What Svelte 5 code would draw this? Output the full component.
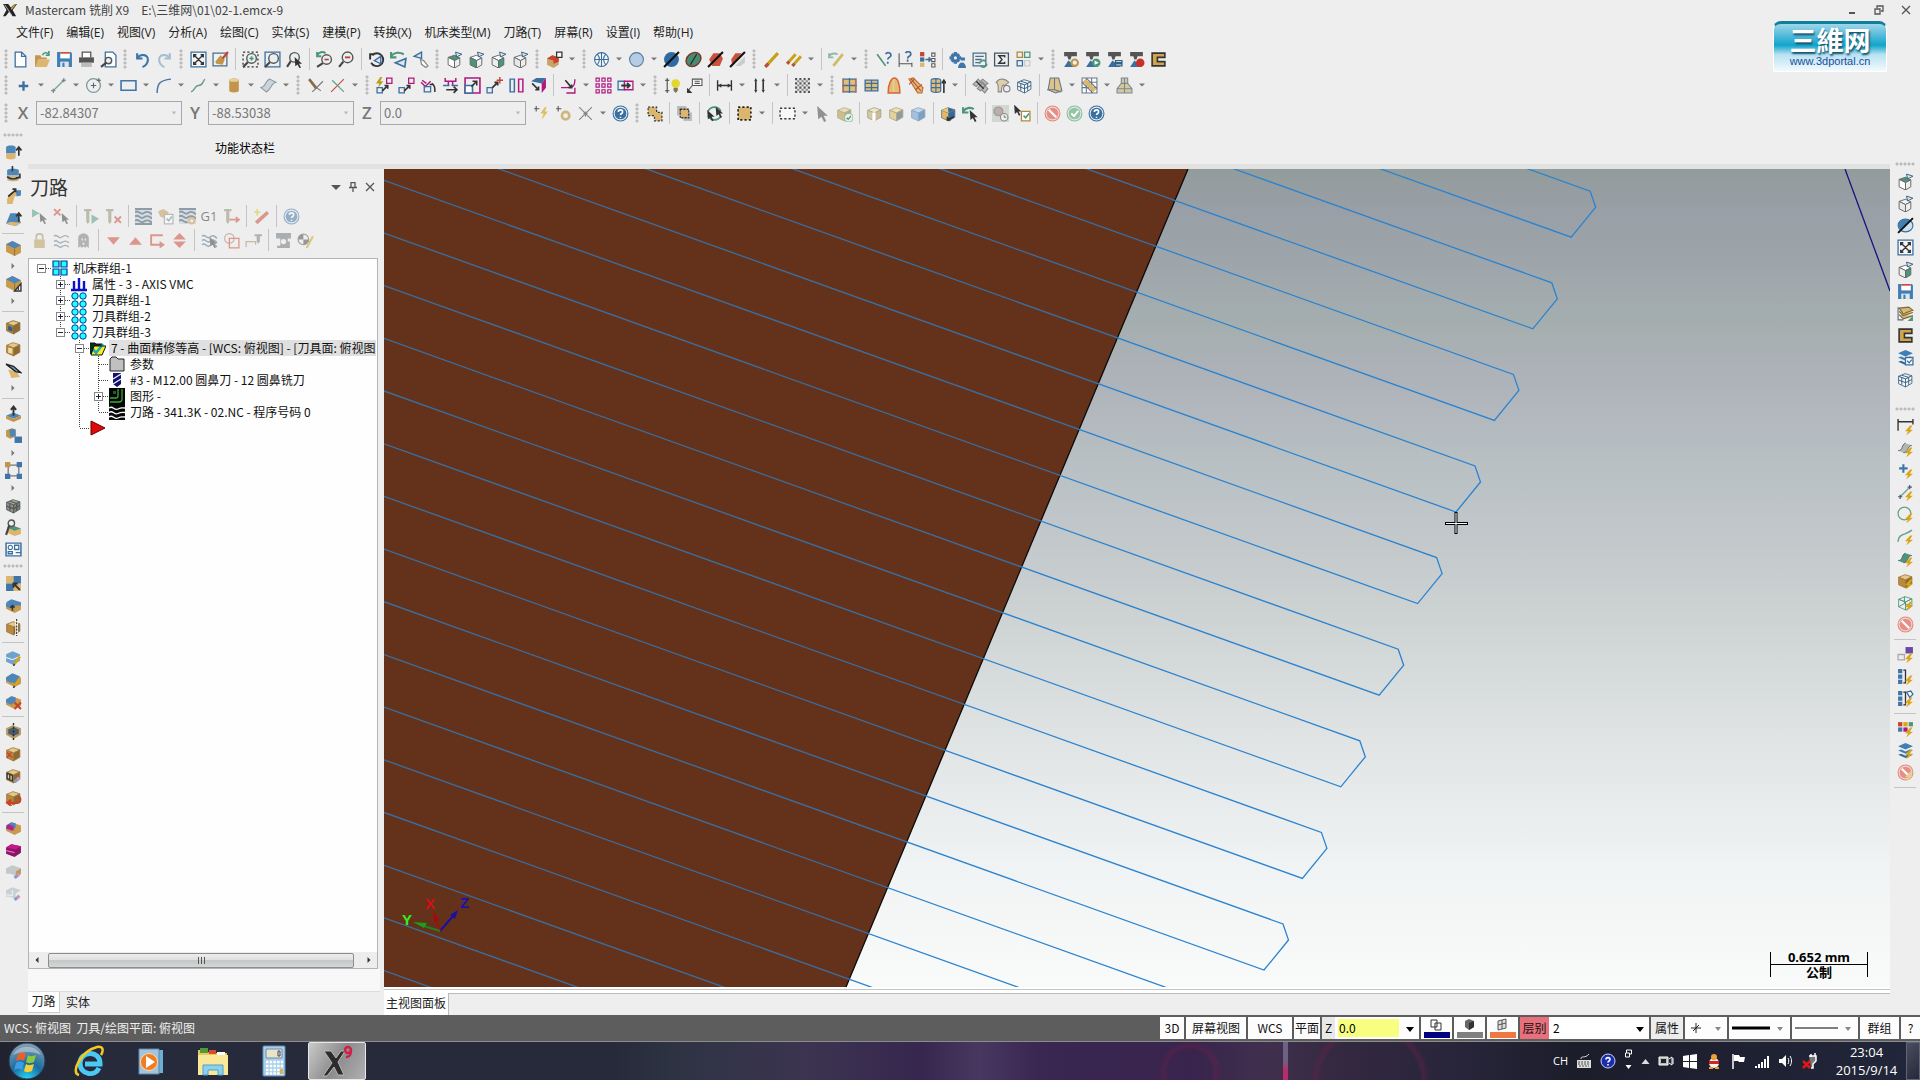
<script lang="ts">
	type Cell = string;

	const p = (d: string, stroke = '#4d4d4d', fill = 'none', w = 1.2) =>
		`<path d="${d}" stroke="${stroke}" fill="${fill}" stroke-width="${w}"/>`;
	const fill = (d: string, color: string) => `<path d="${d}" fill="${color}"/>`;
	const cube = (top: string, left: string, right: string, line = '#777') =>
		p('M1.500 5L7.500 2.500 14 4.500 8 7.500z', line, top, 0.8) +
		p('M1.500 5V12L8 15V7.500z', line, left, 0.8) +
		p('M14 4.500V11.500L8 15V7.500z', line, right, 0.8);
	const tanCube = cube('#e6c88c', '#b8893e', '#8c6a34', '#a07c3c');

	const blue = '#3a6f9f';
	const green = '#4a967a';
	const tan = '#dcb66f';
	const red = '#c9422c';
	const pink = '#b01880';
	const dark = '#333';
	const grey = '#888';

	const bolt = fill('M12.500 7L7.500 12.500h3L8.500 16.500 15 11h-3l2.500-4z', '#d9a514');
	const arrowUp = p('M13 11V3M10.500 6L13 3l2.500 3', dark, 'none', 1.6);
	const cursor = fill('M3 1L13 10H9L11.500 15 9.500 16 7 11 4 13.500z', dark);
	const viewCube = (t: string, l: string, r: string) =>
		p('M2 6L8 4l5 2.500-5 2.500z', '#666', t, 0.9) +
		p('M2 6v7l6 3V9z', '#666', l, 0.9) +
		p('M13 6.500v6.500l-5 3V9z', '#666', r, 0.9) +
		p('M9 1l6 2-5 2.500z', '#356080', '#dce6ec', 0.9);
	const lens = (x: number, y: number, r: number) =>
		`<circle cx="${x}" cy="${y}" r="${r}" fill="#e9f0f2" stroke="#555" stroke-width="1.300"/>` +
		p(`M${x - r + 1} ${y + r - 1}L1 15`, '#444', 'none', 2);
	const lathe = (extra: string) =>
		fill('M2 1h12v4H9l-1 3H6L5 5H2z', '#555') + fill('M2 15h11v-3l-4-1-3-2-2 3z', blue) + extra;
	const help = (c = blue) =>
		`<circle cx="8" cy="8" r="7" fill="#e4edf4" stroke="${c}"/><circle cx="8" cy="8" r="5.500" fill="${c}"/>` +
		p('M6 6.500C6 4 10 4 10 6.500 10 8 8 8 8 9.500M8 11v1.300', '#fff', 'none', 1.5);
	const forbid =
		'<circle cx="8" cy="8" r="7" fill="#f5d5d0" stroke="#e08a80"/><circle cx="8" cy="8" r="5.500" fill="#e58f86"/>' +
		p('M4.500 4.500l7 7', '#fff', 'none', 2);
	const layers =
		fill('M1 4l7-3 7 3-7 3z', '#3f7fb5') + fill('M1 8l3-1 4 2 4-2 3 1-7 3z', '#3f7fb5') + fill('M1 12l3-1 4 2 4-2 3 1-7 3z', '#356c9c');
	const pencil = p('M9 14l5-7', '#d9a514', 'none', 2.4) + p('M8 16l1-2', dark, 'none', 1.4);
	const eraser = p('M9 14l2.500-2', '#7b9fd0', 'none', 3) + p('M11.500 12l2-2', '#dc8fae', 'none', 3);
	const fitAll = p('M1 1h14v14H1z', blue, '#f4f6f7') + p('M3.500 6V3.500H6M10 3.500h2.500V6M12.500 10v2.500H10M6 12.500H3.500V10M4 4l8 8M12 4l-8 8', dark, 'none', 1.3);
	const waves = p('M1 4c3-3 4 3 7 1s4-2 7 1M1 8c3-3 4 3 7 1s4-2 7 1M1 12c3-3 4 3 7 1s4-2 7 1', '#4a6f8a', 'none', 1.4);
	const tool = fill('M1 1h7v2H6v10l-1.500 2L3 13V3H1z', '#8c8c6c');
	const bag = fill('M1 4l6-3 8 4v7l-6 3-8-4z', '#c79a4d') + fill('M1 4l6-3 8 4-6 3z', '#4d86b8') + p('M9 8v7', '#8c6a34', 'none', 0.8);
	const step = fill('M1 6l5-3 9 3v6l-6 3-8-4z', '#c79a4d') + fill('M1 6l5-3 4 1v4l-4 3-5-2z', '#4d86b8');
	const greenSurf = fill('M1 10c5 0 3-6 7-7l6 2c-5 1-3 7-8 7z', '#7fa89a') + p('M1 10c5 0 3-6 7-7M6 12c5 0 3-6 8-7', '#557', 'none', 0.8);

	const icons: Record<string, string> = {
		new: p('M3 1h6l4 4v10H3z', blue, '#fff') + p('M9 1v4h4', blue),
		open: fill('M1 4h5l1 2h5v2H4l-2 7H1z', '#c2964a') + fill('M4 8h11l-3 7H1z', tan) + p('M8 4c1-3 4-3 6-1M14 0v4h-3', green, 'none', 1.5),
		save: fill('M1 1h13l1 1v13H1z', '#3f7fb5') + fill('M4 1h9v6H4z', '#fff') + fill('M4 1h9v1.500H4z', red) + fill('M4 10h8v5H4z', '#dfe6ea') + fill('M6 11h2v4H6z', '#3f7fb5'),
		print: fill('M4 1h8v5H4z', '#fff') + p('M4 6V1h8v5', '#555') + fill('M1 6h14v5H1z', '#555') + fill('M3 11h10v4H3z', '#bbb'),
		preview: p('M5 1h7l3 3v11H5z', blue, '#fff') + lens(8, 9, 3),
		undo: p('M3 2v5h5M3 7c3-5 11-4 10 2-.5 3-2 5-5 6', '#3a74a8', 'none', 2),
		redo: p('M13 2v5H8M13 7C10 2 2 3 3 9c.5 3 2 5 5 6', '#a4bfd0', 'none', 2),
		fit: fitAll,
		repaint: p('M1 2h13v12H1z', '#4a6f8a', '#ecf1f3') + fill('M3 10l5-6 4 4-2 5-6-1z', '#c2964a') + p('M10 7l5-6', red, 'none', 2.2),
		zoomWin: p('M1 1h14v14H1z', dark, 'none').replace('/>', ' stroke-dasharray="2 2"/>') + lens(9, 7, 4.5) + p('M9 5v4M7 7h4', green, 'none', 1.5),
		zoomBox: p('M1 1h14v14H1z', blue) + lens(9, 7, 4.5),
		zoomSel: lens(8, 6, 4.5) + `<g transform="translate(6 5) scale(.7)">${cursor}</g>`,
		unzoom: lens(10, 8, 4.5) + p('M8 8h4', red, 'none', 1.6) + p('M1 1v4h4M1 4c2-3 5-4 8-2', green, 'none', 1.8),
		zoomOut: lens(9, 6, 5) + p('M6.500 6h5', red, 'none', 1.8),
		rotView: p('M4 4a6 6 0 1 1-1 7M2 8V3h4', dark, 'none', 1.8) + p('M12 5L6 9l6 3z', blue, '#dce6ec', 1.3),
		prevView: p('M1 1v5h5M1 5c3-4 8-4 12-2', green, 'none', 2) + p('M15 7L5 11l9 4z', blue, '#dce6ec', 1.5),
		planeView: p('M9 1L2 5l7 2z', blue, '#dce6ec', 1.3) + p('M8 8l3 1 4 5-2 1.500-4-3z', grey, '#fff'),
		viewTop: viewCube('#4a967a', '#fff', '#eee'),
		viewFront: viewCube('#fff', '#4a967a', '#eee'),
		viewRight: viewCube('#fff', '#eee', '#4a967a'),
		viewIso: viewCube('#f2f2f2', '#e8e8e8', '#eee'),
		redBox: fill('M1 7l5-3 6 2v7l-5 3-6-3z', '#c9a56a') + fill('M1 7l5-3 6 2-5 3zM7 9v3l5-2V6z', red) + p('M10 1h5v5h-5z', dark, '#fff'),
		globe: `<circle cx="8" cy="8" r="6.500" fill="#f4f6f7" stroke="${blue}"/>` + p('M1.500 8h13M8 1.500v13M4 3c2.500 3 2.500 7 0 10M12 3c-2.500 3-2.500 7 0 10', blue, 'none', 1),
		sphere: '<circle cx="8" cy="8" r="6.500" fill="#b5cde2" stroke="#54779a"/>',
		shade: '<circle cx="8" cy="8" r="7" fill="#2f6aa3"/>' + p('M1 15L15 1', '#111', 'none', 2),
		greenShade: '<ellipse cx="8" cy="8" rx="7.500" ry="6" transform="rotate(-40 8 8)" fill="#4a8a70" stroke="#7a3a2e" stroke-width="1.400"/>' + p('M5 13l6-10', '#222', 'none', 1),
		redSphere: fill('M2 8l4-6h6l3 5-3 7H5z', '#c9523e') + p('M1 15L15 1', '#111', 'none', 2),
		redHalf: fill('M2 8l4-6h6L3 13z', '#c9523e') + fill('M6 14l9-9v6l-4 3z', '#ccc') + p('M1 15L15 1', '#111', 'none', 2),
		pen: p('M3 14L14 2', '#c9a01c', 'none', 3) + p('M2 15l3-3', '#b5523e', 'none', 3),
		pens: p('M2 12L10 3M7 14l8-9', '#c9a01c', 'none', 2.8) + p('M2 12l2-2M7 14l2-2', '#b5523e', 'none', 2.8),
		penUndo: p('M5 14l9-11', '#cdbb6a', 'none', 2.6) + p('M1 2v4h4M1 5c2-3 5-3 8-2', '#8fb8a8', 'none', 1.8),
		askLine: p('M2 3l8 11', green, 'none', 1.6) + p('M10 3c1-2 5-2 5 1 0 2-3 2-3 4M12 10v2', blue, 'none', 1.6),
		askDim: p('M2 2v13M14 11v4M2 12h12', '#555', 'none', 1) + p('M8 2c1-2 5-2 5 1 0 2-3 2-3 4M10 8v2', blue, 'none', 1.6),
		assoc: fill('M1 1h4v4H1z', red) + fill('M1 6h4v4H1z', blue) + fill('M1 11h4v4H1z', tan) + p('M6 8h5M9 6l2 2-2 2', blue, 'none', 1.4) + p('M12 2h3v3h-3zM12 7h3v3h-3zM12 12h3v3h-3z', '#555', '#fff', 1),
		gear: p('M6 1v11M.5 6.500h11M2.500 3l7 7M9.500 3l-7 7', '#3f75a8', 'none', 3) + `<circle cx="6" cy="6.500" r="1.500" fill="#eee"/>` + fill('M11 6h4v3h-4zM8.500 16c0-7 7.500-7 7.500 0z', '#3f75a8'),
		listSync: p('M2 2h12v12H2zM4 5h8M4 8h6M4 11h4', '#4a6f8a') + p('M8 12a3.500 3.500 0 0 1 6-2M15 12a3.500 3.500 0 0 1-6 2', green, 'none', 1.6),
		sigma: p('M1.500 2h13v12h-13z', '#456') + p('M11 6V4.500H5.500L8.500 8l-3 3.500H11V10', dark, 'none', 1.3),
		fourCol: p('M2 1h5v5H2z', '#b08a3c') + p('M9 1h5v5H9z', green) + p('M2 9h5v5H2z', blue) + p('M9 9h5v5H9z', '#ccc'),
		lathe1: lathe('<circle cx="12" cy="11" r="3" fill="#f0f0f0" stroke="#c2964a" stroke-width="2"/>'),
		lathe2: lathe('<circle cx="11.500" cy="11" r="4" fill="#4a967a"/>' + fill('M10 9l4 2-4 2z', '#fff')),
		lathe3: lathe(p('M9 9h6v2H9zM9 12h6v2H9z', '#356080', '#fff')),
		lathe4: lathe('<circle cx="11.500" cy="11" r="4" fill="#c8302a"/>'),
		clamp: p('M2 2h12v4H7v4h7v4H2z', dark, '#d0a44c', 1.5),
		point: p('M8 4v9M3.500 8.500h9', blue, 'none', 2.2),
		line: p('M3 13L13 3', '#77a594', 'none', 1.3) + p('M1 13h4M3 11v4M11 3h4M13 1v4', '#778', 'none', 1),
		circle: '<circle cx="8" cy="8" r="6.500" fill="none" stroke="#7d9a92" stroke-width="1.200"/>' + p('M8 5.500v5M5.500 8h5M13 1v4M11 3h4', '#567', 'none', 1),
		rect: p('M1 3.500h14v9H1z', '#3f75a8', 'none', 1.5),
		fillet: p('M2 15C2 6 5 3 15 2', '#3f75a8', 'none', 1.4),
		spline: p('M1 14c4-1 3-6 7-6s3-2 6-6', '#6a9a8a', 'none', 1.3),
		cyl: fill('M4 3c0-2 9-2 9 0v10c0 2-9 2-9 0z', '#c2964a') + '<ellipse cx="8.500" cy="3" rx="4.500" ry="1.500" fill="#e9cf98"/>',
		surf: p('M1 10C5 10 5 3 9 2l6 3C10 6 10 13 6 14z', '#8899a5', '#ccd4d8', 1),
		brush: p('M2 2l7 9', '#8a6a4a', 'none', 2.5) + p('M5 14L15 4M13 13L8 9', '#777', 'none', 1),
		trim: p('M2 14L14 2', '#c9523e', 'none', 1.2) + p('M3 3l11 11', '#68a08c', 'none', 1.2),
		dynXf: fill('M4 0L0 6h3l-1 4 5-6H4l2-4z', '#b8a01c') + p('M10 1h5v5h-5z', pink) + p('M1 10h5v5H1z', blue) + p('M6 13l5-5M8 8h3v3', dark, 'none', 1.6),
		xlate: p('M10 1h5v5h-5z', pink) + p('M1 10h5v5H1z', blue) + p('M6 13l5-5M8 8h3v3', dark, 'none', 1.6),
		rotate: p('M1 5l4 4 5-5M2 3l4 3', pink, 'none', 1.3) + p('M4 9h6v5H4z', blue) + p('M11 6c3 2 3 4 3 8M9 7h4', dark, 'none', 1.4),
		mirror: p('M3 1v3h10V1M6 4v4M10 4v4', pink, 'none', 1.4) + p('M1 8h6M9 8h6', blue, 'none', 1.4) + p('M4 12h10M11 9l3 3-3 3', dark, 'none', 1.6),
		scale: p('M1 1h14v14H1z', pink, 'none', 1.5) + p('M1 8h7v7H1z', blue, '#fff', 1.5) + p('M7 9l5-5M8 4h4v4', dark, 'none', 1.5),
		move: p('M1 10h5v5H1z', blue) + p('M6 10l5-5M8 5h3v3', dark, 'none', 1.6) + p('M13 0v6M10 3h6', red, 'none', 1.3),
		offset: p('M2 2h4v12H2z', blue, 'none', 1.4) + p('M10 2h4v12h-4z', pink, 'none', 1.4),
		project: fill('M1 4l5-3h9l-4 5z', blue) + fill('M11 6l4-5v9l-4 5z', pink) + p('M2 6l6 6M5 12h3V9', dark, 'none', 1.6),
		curl: p('M1 10h5c5 0 8 0 8-8M14 10v5H6', pink, 'none', 1.3) + p('M5 3l6 7M8 10h3V7', dark, 'none', 1.5),
		array: p('M1 1h3v3H1zM6.500 1h3v3h-3zM12 1h3v3h-3zM1 6.500h3v3H1zM6.500 6.500h3v3h-3zM12 6.500h3v3h-3zM1 12h3v3H1zM6.500 12h3v3h-3zM12 12h3v3h-3z', pink, 'none', 1.1),
		stretch: p('M1 4h6v8H1z', blue) + p('M7 4h8v8H7z', pink) + p('M4 8h8M9.500 5.500L12 8l-2.500 2.500', dark, 'none', 1.7),
		bulb: p('M3 1v14M1 3h4M1 13h4', '#444', 'none', 1) + '<circle cx="11" cy="6" r="4" fill="#e3d62c"/>' + fill('M9 10h4v3l-2 2-2-2z', '#7a7a5a'),
		note: p('M6 2h9v6H6zM8 4h5M8 6h5M6 8L1 14', '#555', '#fff', 1) + fill('M1 10v5h5z', dark),
		dimH: p('M1.500 3v10M14.500 3v10M2 8h12', dark, 'none', 1.3) + fill('M2 8l3-2v4zM14 8l-3-2v4z', dark),
		dimV: p('M4.500 4v8M11.500 4v8', dark, 'none', 1.5) + fill('M3 4h3l-1.500-3zM3 12h3l-1.500 3zM10 4h3l-1.500-3zM10 12h3l-1.500 3z', dark),
		hatch: p('M1 2h14M1 6h14M1 10h14M1 14h14', '#555', 'none', 2).replace('/>', ' stroke-dasharray="2 2"/>') + p('M3 4h12M3 8h12M3 12h12', '#888', 'none', 2).replace('/>', ' stroke-dasharray="2 2"/>'),
		netFlat: p('M2 2h12v12H2zM8 1v14M1 8h14', blue, '#e2bd78', 1.2) + p('M2 1v14M14 1v14', '#d0704a', 'none', 1),
		netRows: p('M2 3h12v10H2zM2 6h12M2 10h12M8 3v10', blue, '#e2bd78', 1.2),
		netArch: p('M3 15C3 6 6 1 9 1s5 6 5 14z', '#d8633a', '#e2bd78', 1.4) + p('M8 2v12', '#e9cf98'),
		netSweep: p('M2 2l4-1 9 9-1 5-4 0z', '#c8702f', '#e2bd78', 1.2) + p('M4 2l9 11M2 7l5-5M8 12l6-5', '#b05040', 'none', 1),
		netCyl: p('M2 3c0-2 9-2 9 0v10c0 2-9 2-9 0zM2 6h9M2 10h9M6.500 2v12', blue, '#e2bd78', 1.1) + p('M14 15V4M12 6l2-3 2 3', dark, 'none', 1.5),
		fan: p('M1 7l5-5 2 3-4 4zM5 11l5-6 3 3-5 5zM10 2l5 4-3 2-4-4zM9 12l3-4 3 3-3 4z', grey, '#bbb', 1) + p('M4 4l7 7', dark, 'none', 1.2),
		fan2: p('M2 5c4-5 9-3 12 0l-4 3c-2-1-3 0-3 6H4c0-6 0-8-2-9z', grey, '#ddd0a8', 1) + '<circle cx="12" cy="11" r="3" fill="none" stroke="#778"/>',
		wireCube: cube('#f4f6f7', '#f4f6f7', '#f4f6f7', '#356080') + p('M4.500 4L11 6V13M4.500 6v7M1.500 8.500L8 11l6-3', '#356080', 'none', 0.9),
		iron: p('M4 1h8l3 12-6 2-7-3z', '#678', '#dcc48c', 1) + p('M8 1v11M1 12l7 0 6 2', '#678', 'none', 1),
		mesh: p('M1 1h14v14H1zM1 5h14M1 10h14M5 1v14M10 1v14', '#678', '#fff', 1) + p('M3 3l10 10', tan, 'none', 4) + p('M1 5l10 10M5 1l10 10', '#678', 'none', 1),
		bell: p('M5 1h6v5l4 5v4H1v-4l4-5zM1 11h14M5 6h6M8 1v14', '#789', '#d8c89c', 1),
		autoPt: p('M3 1v5M1 3.500h5', '#555', 'none', 1) + fill('M11 2L7 8h3l-2 6 6-8h-3l2-4z', '#dcc060'),
		gearPt: p('M3 1v5M1 3.500h5', '#555', 'none', 1) + '<circle cx="10" cy="10" r="3.500" fill="none" stroke="#ccb87c" stroke-width="2.500"/>',
		cross: p('M2 2l12 12M14 2L2 14M8 6v5M6 8h4', '#888', 'none', 1.1),
		help: help(),
		selA: fill('M2 2h8v5h5v8H8V10H2z', tan) + p('M2 2h8v5h5v8H8V10H2z', dark).replace('/>', ' stroke-dasharray="2 1.500"/>'),
		selB: fill('M1 1h9v9H1z', '#bbb') + fill('M7 7h8v8H7z', '#bbb') + fill('M4 4h8v8H4z', tan) + p('M4 4h8v8H4z', dark).replace('/>', ' stroke-dasharray="2 1"/>'),
		selC: p('M2 6a6.500 6.500 0 0 1 12 0M2 10a6.500 6.500 0 0 0 12 0', green, 'none', 1.6) + `<g transform="translate(-1 4) scale(.7)">${cursor}</g><g transform="translate(7 1) scale(.7)">${cursor}</g>`,
		selD: fill('M2 2h12v12H2z', tan) + p('M2 2h12v12H2z', '#222', 'none', 1.6).replace('/>', ' stroke-dasharray="2 2"/>'),
		window: p('M1 3h14v10H1z', dark, '#f8f8f8', 1.3).replace('/>', ' stroke-dasharray="2 2"/>'),
		cursorG: `<g opacity=".5">${cursor}</g>`,
		cubeOk: cube('#e8ddb8', '#cdbf8c', '#b8a878', '#b8b090') + '<circle cx="12" cy="12" r="4" fill="#e8f2ec" stroke="#9cc0a8"/>' + p('M10 12l1.500 1.500L14 10.500', green),
		cubeA: cube('#efe6c4', '#d6c8a0', '#c9bd98', '#a8a490') + p('M7.500 7v8', '#fff', 'none', 3),
		cubeB: cube('#efe2b4', '#e2d29c', '#8e9aa4', '#b0a888'),
		cubeC: cube('#c4d8ea', '#a4c0dc', '#7ba2c4', '#8aa8c4'),
		cubeD: cube('#2f6aa3', '#e6b862', '#2f6aa3', '#678') + fill('M1.500 5L7.500 2.500 8 7.500z', '#f0c874') + p('M7 14l6-3M7 11v3h3', dark, 'none', 1.6),
		backSel: p('M1 2v5h5M1 6c3-4 8-4 10-2', green, 'none', 2) + `<g transform="translate(5 4) scale(.75)">${cursor}</g>`,
		clockSel: fill('M0 0h16v16H0z', '#d4d6d4') + '<circle cx="6" cy="6" r="4" fill="#c8a8a8" stroke="#8aa89a" stroke-width="1.400"/><circle cx="11.500" cy="11.500" r="3.500" fill="#eee" stroke="#888"/>' + p('M11.500 9.500v2h2', '#777', 'none', 0.9),
		clip: `<g transform="translate(-2 -1) scale(.7)">${cursor}</g>` + p('M7 6h8v9H7z', '#b08a3c', '#fff') + p('M9 10l2 2 3-4', green, 'none', 1.4),
		no: forbid,
		ok: '<circle cx="8" cy="8" r="7" fill="#dcebe2" stroke="#8cbc9c"/><circle cx="8" cy="8" r="5.500" fill="#96c4a6"/>' + p('M5 8l2.500 2.500L11.500 5.500', '#fff', 'none', 1.8),
		// panel tools
		selAll: fill('M1 1l7 4-7 4z', green) + `<g transform="translate(6 4) scale(.7)">${cursor}</g>`,
		selNone: p('M1 1l6 6M7 1L1 7', red, 'none', 1.8) + `<g transform="translate(6 4) scale(.7)">${cursor}</g>`,
		regen: tool + fill('M8 6l7 4-7 5z', green),
		regenX: tool + p('M9 8l6 6M15 8l-6 6', red, 'none', 1.8),
		backplot: fill('M0 1h16v14H0z', '#c4ccd2') + p('M0 4c3-3 5 3 8 1s5-2 8 1M0 8c3-3 5 3 8 1s5-2 8 1M0 12c3-3 5 3 8 1s5-2 8 1M0 1h16M0 15h16', '#2c4c64', 'none', 1.8),
		verify: fill('M1 3l5-2 5 3-3 6-5-2z', '#c2964a') + p('M7 6h8v9H7z', '#888', '#fff') + p('M9 10l2 2 3-4', green, 'none', 1.4),
		simul: fill('M0 1h16v14H0z', '#c4ccd2') + p('M0 4c3-3 5 3 8 1s5-2 8 1M0 8c3-3 5 3 8 1s5-2 8 1M0 12c3-3 5 3 8 1M0 1h16', '#2c4c64', 'none', 1.8) + '<circle cx="12" cy="12" r="2.500" fill="#eee" stroke="#c2964a" stroke-width="2"/>',
		feed: tool + p('M6 11h9M12 8.500l3 2.500-3 2.500', red, 'none', 1.6),
		wand: p('M3 14L14 4', red, 'none', 3.4) + p('M4 1v6M1 4h6', '#d9c514', 'none', 1.6),
		lock: fill('M3 7h10v8H3z', '#b89a50') + p('M5 7V4c0-3 6-3 6 0v3', '#a09060', 'none', 1.6),
		wavesG: p('M1 4c3-3 4 3 7 1s4-2 7 0M1 9c3-3 4 3 7 1s4-2 7 0M1 13c3-3 4 3 7 1s4-2 7 0', '#5a7488', 'none', 1.2),
		ghost: fill('M3 15V6c0-6 10-6 10 0v9l-2-1.500-1.500 1.500L8 13.500 6.500 15 5 13.500z', '#777') + fill('M6 6h1.500v2H6zM9 6h1.500v2H9zM7 10h2v2H7z', '#ddd'),
		down: fill('M2 5h12l-6 7z', red),
		up: fill('M2 12h12L8 5z', red),
		route: p('M13 3H2v9h9', red, 'none', 1.8) + fill('M10 8.500l5 3.500-5 3.500z', red),
		split: fill('M2 7h12L8 1zM2 9h12l-6 6z', red),
		wavesSel: waves + `<g transform="translate(6 4) scale(.7)">${cursor}</g>`,
		shapes: '<circle cx="6" cy="6" r="4.500" fill="none" stroke="#a07070"/>' + p('M6 6h9v9H6z', red),
		probe: p('M1 14V9h9v3', '#a08858') + fill('M9 2h7v2h-2v5l-1.500 2L11 9V4H9z', '#777'),
		machine: fill('M1 1h14v5h-3v3h2v6H2v-2h3V6H1z', '#6a6f74') + '<circle cx="8" cy="9" r="2.500" fill="#eee"/>',
		edit: '<circle cx="6" cy="7" r="5" fill="#eee" stroke="#555"/>' + fill('M6 2v5H1a5 5 0 0 1 5-5zM6 12V7h5a5 5 0 0 1-5 5z', '#444') + p('M9 15L15 4', '#c9a01c', 'none', 2),
		// left bar
		extrude: fill('M1 3c0-2 9-2 9 0v6H1z', '#4d86b8') + fill('M1 9h9v4c0 2-9 2-9 0z', tan) + arrowUp,
		revolve: fill('M2 4c0-2 11-2 11 0v5H2z', '#4d86b8') + fill('M2 9h11v4c0 2-11 2-11 0z', '#c9b88a') + p('M7 0v5M2 10c3 3 8 3 12 0M14 7v4h-4', dark, 'none', 1.5),
		sweep: fill('M2 10l4-6 9-2v4l-6 2-2 7H2z', tan) + fill('M10 2h5v5l-4 1z', '#4d86b8') + p('M3 8l7-6M7 1h3v3', dark, 'none', 1.6),
		loft: fill('M5 3h6l4 9-5 3-9-2z', '#4d86b8') + fill('M1 13l4-2 10 1-5 3z', tan) + arrowUp,
		bool: bag,
		fil1: bag + p('M9 15h6V8z', dark, '#fff', 1.3) + p('M12.500 11v3', dark),
		shell: cube('#e6c88c', '#b8893e', '#8c6a34', '#8c6a34') + fill('M3 7l4 2v4l-4-1.500z', '#2f5d88'),
		thick: tanCube + fill('M3 7l4 1v5l-4-1z', '#f0d8a4'),
		draft: fill('M3 7l8 2 3 5-8 1z', tan) + p('M1 2l7 2 7 6-5-1z', '#222', '#6c9cc4', 1.3),
		pushUp: fill('M1 10l7-3 7 3-7 3z', '#4d86b8') + fill('M1 10v3l7 3 7-3v-3l-7 3z', '#c2964a') + p('M8 10V2M5.500 4.500L8 1.500l2.500 3', dark, 'none', 1.8),
		blocks: fill('M1 3l6-2 3 2v6l-5 2-4-2z', '#c2964a') + fill('M4 2h6v7H5z', '#4d86b8') + fill('M9 9h7v6H9z', '#3f75a8'),
		nodes: p('M3 3h10v10H3z', '#777', 'none', 1.2) + fill('M0 0h5v5H0z', '#c2964a') + fill('M11 0h5v5h-5zM0 11h5v5H0zM11 11h5v5h-5z', '#3f75a8'),
		latt: cube('#b8a888', '#9a917c', '#857e6c', '#4a5a66') + p('M4.500 4L11 6V13M4.500 6v7M1.500 8.500L8 11l6-3', '#4a5a66', 'none', 1.2),
		inspect: fill('M2 8l5-2 8 3v5l-6 2-7-3z', tan) + fill('M2 8l5-2 8 3-6 2z', green) + lens(6, 4, 3),
		layout: p('M1 2h14v12H1z', blue, '#fff', 1.4) + '<circle cx="5" cy="6" r="2" fill="none" stroke="#3a6f9f"/>' + p('M9 4h4v4H9zM3 10h4v2H3zM10 11h5', blue, 'none', 1.2),
		tiles: fill('M1 1h7v7H1zM8 8h7v7H8z', tan) + fill('M8 1h7v7H8zM1 8h7v7H1z', '#3f75a8') + p('M14 14L8 8M8 12V8h4', dark, 'none', 1.8),
		pushFace: step + fill('M1 5l5-3 9 3v3L6 8z', '#4d86b8') + p('M7 13V8M5 10l2-2 2 2', dark, 'none', 1.4),
		splitC: tanCube + p('M11 1v14', '#fff', 'none', 2.6) + p('M11 0v16', '#222', 'none', 1).replace('/>', ' stroke-dasharray="2 1"/>'),
		pen1: fill('M1 5l6-3 7 3v6l-6 4-7-3z', '#6fa3cc') + p('M1 8l6 2 7-3', '#fff', 'none', 0.9) + pencil,
		pen2: step + fill('M1 6l6-4 7 3-5 7z', '#4d86b8') + pencil,
		del: step + p('M9 9l6 6M15 9l-6 6', red, 'none', 2),
		cutV: fill('M1 5l6-3 8 3v6l-7 4-7-4z', '#b89a60') + fill('M3 6l5-2 5 2v4l-5 2-5-2z', '#4a5a70') + p('M8 0v16', '#222', 'none', 1.2).replace('/>', ' stroke-dasharray="2 1.500"/>'),
		cubeX: tanCube + p('M2 7l5 5M6 7l-4 5', red, 'none', 1.2),
		cubeWin: tanCube + p('M2 6l5 2v5l-5-2zM4.500 7v5', dark, '#d8d0b0', 1.2) + eraser,
		cubeBack: tanCube + p('M3 13h9c3 0 3-5 1-6M6 10l-4 3 4 3', red, 'none', 2),
		stepP: step + fill('M3 5l5 2v4L1 9z', '#c2188a'),
		stepPink: fill('M1 6l5-3 9 2v6l-6 4-8-3z', '#8c1464') + fill('M1 6l5-3 9 2-5 3z', '#c2188a') + p('M1 9l8 2', '#e46ac0'),
		greyStep: fill('M1 5l6-3 8 3-5 3v4l-5-2-4 0z', '#c4c8c8') + fill('M10 8l5-3v5l-5 4z', '#b89a60') + eraser,
		greyStep2: fill('M1 5l6-3 8 3-5 3v5l-5-2-4 0z', '#c8d0d4') + p('M1 9l6 1M7 5v5', '#eee') + eraser,
		// right bar
		halfGlobe: '<ellipse cx="8" cy="8" rx="7" ry="6" fill="#cfe0ee" stroke="#356c9c"/>' + fill('M1 8a7 6 0 0 1 12-4L3 12z', '#3f7fb5') + p('M1 15L15 1', '#111', 'none', 1.8),
		stack: p('M2 3l9-1 4 3-9 3zM2 6l4 4 9-3M2 9l4 4 9-3', '#7a6a3a', '#dcb66f', 1.1) + fill('M10 15l5-5v5z', green) + p('M1 2v12h5', '#567', 'none', 1),
		layersOk: layers + p('M8 8h7v7H8z', blue, '#fff') + p('M9.500 11l2 2 2.500-3', blue),
		bDim: p('M1 1v11M15 1v5M1 3.500h14', dark, 'none', 1.3) + bolt,
		bSurf: greenSurf.replace('#7fa89a', '#b0b8b0') + bolt,
		bPt: p('M6 2v8M2 6h8', '#3f75a8', 'none', 2) + bolt,
		bLine: p('M3 12l8-8', '#68a08c') + p('M1 12h4M3 10v4M10 3h4M12 1v4', '#457', 'none', 1.1) + bolt,
		bCirc: '<circle cx="7" cy="7" r="6" fill="none" stroke="#68a08c" stroke-width="1.200"/>' + bolt,
		bCurve: p('M1 13C1 5 8 7 14 2', '#68a08c', 'none', 1.4) + bolt,
		bGreen: greenSurf.replace('#7fa89a', '#4a967a') + bolt,
		bCube: tanCube + bolt,
		bWire: cube('none', 'none', 'none', '#4a967a') + p('M1.500 12L7 9l7 2.500M7 2.500V9', '#4a967a', 'none', 0.9) + bolt,
		bBox: fill('M8 1h7v6H8z', '#6a4aa0') + p('M1 8h6v5H1z', '#aaa') + bolt,
		bList: fill('M1 1h4v4H1zM1 6h4v4H1zM1 11h4v4H1z', '#3f75a8') + p('M6 2h2v12H6', dark) + bolt,
		bTag: fill('M1 1h4v4H1zM1 6h4v4H1zM1 11h4v4H1z', '#3f75a8') + p('M6 2h2v12H6', dark) + p('M9 2l4-1 2 3-3 3z', blue, '#fff') + bolt,
		bColor: fill('M1 2h4v4H1z', red) + fill('M6 2h4v4H6z', '#d9a514') + fill('M11 2h4v4h-4z', green) + fill('M1 7h4v4H1z', '#3f75a8') + fill('M6 7h4v4H6z', pink) + bolt,
		bLayers: layers + bolt,
		bNo: forbid + bolt.replace('#d9a514', '#e6d48a'),
		// tree nodes
		tGroup: p('M1 1h6v6H1zM9 1h6v6H9zM1 9h6v6H1zM9 9h6v6H9z', '#003a9c', '#2ff', 1.2),
		tProps: p('M3 5v9M8 2v12M13 5v9M0 14h16', '#1010c8', 'none', 2.4),
		tTools: '<g fill="#2ff" stroke="#003a9c"><circle cx="4" cy="4" r="3.200"/><circle cx="12" cy="4" r="3.200"/><circle cx="4" cy="12" r="3.200"/><circle cx="12" cy="12" r="3.200"/></g>',
		tOp: fill('M0 3h5l1 1h6v10H0z', '#0b2b1c') + fill('M4 6h12l-4 9H1z', '#f4f020') + p('M3 9l3 4 7-9', '#18a8b8', 'none', 2.4) + p('M0 3h5l1 1h6M4 6h12l-4 9H1z', '#111', 'none', 1),
		tFolder: p('M1 3l2-2h4l2 2h6v12H1z', '#222', '#c0c0c0', 1),
		tTool: fill('M4 1h8v11l-4 3-4-3z', '#101070') + p('M4 7l8-5M4 12l8-5', '#f4f4f4', 'none', 1.4),
		tGeo: fill('M0 0h16v16H0z', '#050505') + p('M13 1v10c0 2-1 3-3 3H1M9 1v7c0 1-1 2-2 2H1', '#3aa83a', 'none', 1.3) + fill('M4 3h3v3H4z', '#2a5a2a'),
		tNc: fill('M0 0h16v16H0z', '#080808') + p('M0 4c4-3 5 3 9 1s4-1 7-1M0 8.500c4-3 5 3 9 1s4-1 7-1M0 13c4-3 5 3 9 1s4-1 7-1', '#fff', 'none', 1.3),
		tEnd: p('M1 1l14 7-14 7z', '#600', '#e00808', 1)
	};

	const menus = ['文件(F)', '编辑(E)', '视图(V)', '分析(A)', '绘图(C)', '实体(S)', '建模(P)', '转换(X)', '机床类型(M)', '刀路(T)', '屏幕(R)', '设置(I)', '帮助(H)'];

	// ":" grip, "|" separator, "v" / ">" drop-down arrow, anything else an icon name
	const parse = (s: string): Cell[] => s.trim().split(/\s+/);
	const rowFile = parse(`: new open save print preview : undo redo : fit repaint | zoomWin zoomBox zoomSel | unzoom zoomOut | rotView prevView planeView
		: viewTop viewFront viewRight viewIso : redBox v : globe v sphere v shade greenShade redSphere redHalf : pen pens v | penUndo v
		: askLine askDim assoc | gear listSync sigma fourCol v : lathe1 lathe2 lathe3 lathe4 clamp`);
	const rowDraw = parse(`: point v line v circle v rect v fillet v spline v cyl v surf v : brush trim v : dynXf xlate rotate mirror scale move offset project
		| curl v array stretch v : bulb note | dimH v dimV v | hatch v : netFlat netRows netArch netSweep netCyl v | fan fan2 wireCube | iron v mesh v bell v`);
	const rowSelect = parse(`autoPt gearPt cross v help : selA | selB | selC | selD v | window v cursorG cubeOk | cubeA cubeB cubeC | cubeD backSel | clockSel clip | no ok help`);
	const leftBar = parse(`: extrude revolve sweep loft | bool > fil1 > | shell thick draft > | pushUp blocks > nodes > latt inspect layout
		: tiles pushFace splitC | pen1 pen2 del | cutV cubeX cubeWin cubeBack | stepP stepPink greyStep greyStep2`);
	const rightTop = parse('viewTop viewIso halfGlobe fit viewRight save stack clamp layersOk wireCube');
	const rightBottom = parse('bDim bSurf bPt bLine bCirc bCurve bGreen bCube bWire no | bBox bList bTag | bColor bLayers bNo |');
	const panelA = parse('selAll selNone | regen regenX | backplot verify simul G1 feed | wand | help');
	const panelB = parse('lock wavesG ghost | down up route split | wavesSel shapes probe | machine edit');

	let axes = $state([
		{ id: 'X', value: '-82.84307' },
		{ id: 'Y', value: '-88.53038' },
		{ id: 'Z', value: '0.0' }
	]);
	let depth = $state('0.0');

	// guide cells: "." blank, "i" line, "t" tee, "l" corner, "+" / "-" box
	// ("d" continues the line below a box, "u" above it)
	const tree = [
		{ guides: ['-'], icon: 'tGroup', label: '机床群组-1' },
		{ guides: ['.', '+ud'], icon: 'tProps', label: '属性 - 3 - AXIS VMC' },
		{ guides: ['.', '+ud'], icon: 'tTools', label: '刀具群组-1' },
		{ guides: ['.', '+ud'], icon: 'tTools', label: '刀具群组-2' },
		{ guides: ['.', '-u'], icon: 'tTools', label: '刀具群组-3' },
		{ guides: ['.', '.', '-ud'], icon: 'tOp', label: '7 - 曲面精修等高 - [WCS: 俯视图] - [刀具面: 俯视图', selected: true },
		{ guides: ['.', '.', 'i', 't'], icon: 'tFolder', label: '参数' },
		{ guides: ['.', '.', 'i', 't'], icon: 'tTool', label: '#3 - M12.00 圆鼻刀 - 12 圆鼻铣刀' },
		{ guides: ['.', '.', 'i', '+ud'], icon: 'tGeo', label: '图形 -' },
		{ guides: ['.', '.', 'i', 'l'], icon: 'tNc', label: '刀路 - 341.3K - 02.NC - 程序号码 0' },
		{ guides: ['.', '.', 'l'], icon: 'tEnd', label: '' }
	];

	// zig-zag passes of the toolpath, one hairpin per index
	const SLOPE = 0.3585;
	const passes = Array.from({ length: 15 }, (_, n) => {
		const dx = (3 - (n - 1)) * 38.4;
		const dy = (3 - (n - 1)) * -91.6;
		const top = [1091 + dx, 297 + dy];
		const tip = [1096.5 + dx, 313 + dy];
		const low = [1072 + dx, 343 + dy];
		return `M0 ${top[1] - top[0] * SLOPE}L${top}L${tip}L${low}L0 ${low[1] - low[0] * SLOPE}`;
	});
</script>

{#snippet cells(list: Cell[])}
	{#each list as c}
		{#if c === ':'}
			<span class="grip"></span>
		{:else if c === '|'}
			<span class="sep"></span>
		{:else if c === 'v' || c === '>'}
			<button class="more" aria-label="more"><svg viewBox="0 0 8 8"><path d={c === 'v' ? 'M0 2h8L4 6z' : 'M2 0v8l4-4z'} /></svg></button>
		{:else if c === 'G1'}
			<button class="tool g1">G1</button>
		{:else}
			<button class="tool" aria-label={c}><svg viewBox="0 0 16 16" fill="none">{@html icons[c]}</svg></button>
		{/if}
	{/each}
{/snippet}

<div class="app">
	<header>
		<div class="titlebar">
			<svg class="appicon" viewBox="0 0 16 16">
				<path d="M0 1h6l3 4 4-4h3l-5 7 4 7h-4L7 10l-4 5H0l4-7z" fill="#222" /><path d="M9 6l4-5h2l-5 7z" fill="#b8a94a" /><path d="M2 2l8 12" stroke="#bbb" />
			</svg>
			<span>Mastercam 铣削 X9</span>
			<span class="path">E:\三维网\01\02-1.emcx-9</span>
			<div class="winbtns">
				<button aria-label="minimize"><svg viewBox="0 0 10 10"><path d="M2 8h6" stroke-width="2" /></svg></button>
				<button aria-label="restore"><svg viewBox="0 0 10 10"><path d="M3 3V1h6v5H7M1 4h5v5H1z" /></svg></button>
				<button aria-label="close"><svg viewBox="0 0 10 10"><path d="M1 1l8 8M9 1L1 9" /></svg></button>
			</div>
		</div>
		<nav class="menu">
			{#each menus as m}<button>{m}</button>{/each}
		</nav>
		<div class="bar bar--file">{@render cells(rowFile)}</div>
		<div class="bar bar--draw">{@render cells(rowDraw)}</div>
		<div class="bar bar--coords">
			<span class="grip"></span>
			{#each axes as axis}
				<label class="axis" for="axis-{axis.id}">{axis.id}</label>
				<div class="combo">
					<input id="axis-{axis.id}" bind:value={axis.value} />
					<svg viewBox="0 0 8 8"><path d="M1 2h6L4 6z" /></svg>
				</div>
			{/each}
			{@render cells(rowSelect)}
		</div>
		<a class="brand" href="#portal">
			<strong>三維网</strong>
			<span>www.3dportal.cn</span>
		</a>
	</header>

	<div class="body">
		<div class="side side--left">{@render cells(leftBar)}</div>

		<main>
			<div class="prompt">功能状态栏</div>
			<div class="work">
				<section class="panel">
					<div class="panel__head">
						<h2>刀路</h2>
						<button aria-label="options"><svg viewBox="0 0 10 10"><path d="M0 3h10L5 8z" fill="#555" stroke="none" /></svg></button>
						<button aria-label="pin"><svg viewBox="0 0 10 10"><path d="M3 0v5M7 0v5M3 .5h4M1 5.500h8M5 6v4" /></svg></button>
						<button aria-label="close"><svg viewBox="0 0 10 10"><path d="M1 1l8 8M9 1L1 9" /></svg></button>
					</div>
					<div class="bar bar--panel">{@render cells(panelA)}</div>
					<div class="bar bar--panel">{@render cells(panelB)}</div>
					<div class="treebox">
						<ul class="tree">
							{#each tree as node}
								<li>
									{#each node.guides as g}
										<svg class="guide" viewBox="0 0 19 16">
											{#if g === 'i' || g === 't'}<path d="M9.500 0v16" />{/if}
											{#if g === 'l'}<path d="M9.500 0v8" />{/if}
											{#if g.includes('u')}<path d="M9.500 0v4" />{/if}
											{#if g.includes('d')}<path d="M9.500 12v4" />{/if}
											{#if g === 't' || g === 'l'}<path d="M10 8.500h9" />{/if}
											{#if g[0] === '+' || g[0] === '-'}
												<path d="M14 8.500h5" />
												<rect x="5.500" y="4.500" width="8" height="8" />
												<path class="sign" d={g[0] === '+' ? 'M7 8.500h5M9.500 6v5' : 'M7 8.500h5'} />
											{/if}
										</svg>
									{/each}
									<svg class="node" viewBox="0 0 16 16" fill="none">{@html icons[node.icon]}</svg>
									{#if node.label}<span class:selected={node.selected}>{node.label}</span>{/if}
								</li>
							{/each}
						</ul>
						<div class="scroll">
							<svg viewBox="0 0 8 8"><path d="M6 0v8L2 4z" /></svg>
							<div class="thumb"><i></i><i></i><i></i></div>
							<svg viewBox="0 0 8 8"><path d="M2 0v8l4-4z" /></svg>
						</div>
					</div>
					<div class="tabs">
						<button class="active">刀路</button>
						<button>实体</button>
					</div>
				</section>

				<section class="view">
					<svg class="canvas" viewBox="0 0 1506 818" preserveAspectRatio="xMinYMin slice">
						<defs>
							<linearGradient id="sky" x1="0" y1="0" x2="0" y2="1">
								<stop offset="0" stop-color="#939c9c" />
								<stop offset=".05" stop-color="#989fa6" />
								<stop offset=".12" stop-color="#9ea6ab" />
								<stop offset=".19" stop-color="#a5aeaf" />
								<stop offset=".26" stop-color="#aeb3ba" />
								<stop offset=".36" stop-color="#b8c0c3" />
								<stop offset=".46" stop-color="#c3c8cb" />
								<stop offset=".57" stop-color="#d0d5d5" />
								<stop offset=".7" stop-color="#e0e4e4" />
								<stop offset=".85" stop-color="#f0f3f3" />
								<stop offset="1" stop-color="#f9fbfa" />
							</linearGradient>
						</defs>
						<rect width="1506" height="818" fill="url(#sky)" />
						<path d="M0 0H804L462 818H0z" fill="#65321b" />
						<path d="M804 0L462 818" stroke="#0a0a0a" stroke-width="1.300" />
						<g class="passes">
							{#each passes as d}<path {d} />{/each}
						</g>
						<path class="passes-dim" d="M0 0H803L461 818H0z" />
						<path d="M1461 0L1506 122" stroke="#15157c" stroke-width="1.300" />
						<g class="triad">
							<path d="M56 762L70 746" stroke="#1a10a0" stroke-width="2" /><path d="M74 741l-3 9-5-4z" fill="#1a10a0" />
							<path d="M56 762l-5-12" stroke="#a01010" stroke-width="2" /><path d="M49 742l6 9-5 2z" fill="#a80808" />
							<path d="M56 762l-16-5" stroke="#208020" stroke-width="2" /><path d="M29 753l14 1-3 5z" fill="#18a018" />
							<text x="41" y="740" fill="#d80c18">X</text>
							<text x="18" y="756" fill="#30f020">Y</text>
							<text x="76" y="739" fill="#1c10b0">Z</text>
						</g>
						<g class="pointer">
							<path d="M1072 343v22M1061 354.500h23" stroke="#000" stroke-width="3" />
							<path d="M1072 344v20M1062 354.500h21" stroke="#fff" />
						</g>
						<g class="scalebar">
							<path d="M1386.500 783v25M1483.500 783v25M1387 795.500h97" />
							<text x="1435" y="793">0.652 mm</text>
							<text x="1435" y="808">公制</text>
						</g>
					</svg>
					<div class="viewtabs">
						<button>主视图面板</button>
						<div></div>
					</div>
				</section>
			</div>
		</main>

		<div class="side side--right">
			<span class="grip"></span>
			{@render cells(rightTop)}
			<span class="grip grip--gap"></span>
			{@render cells(rightBottom)}
		</div>
	</div>

	<footer class="status">
		<p>WCS: 俯视图&nbsp; 刀具/绘图平面: 俯视图</p>
		<button class="w24">3D</button>
		<button class="w60">屏幕视图</button>
		<button class="w44">WCS</button>
		<button class="w26">平面</button>
		<div class="field w97">
			<label for="depth">Z</label>
			<input id="depth" class="yellow" bind:value={depth} />
			<svg viewBox="0 0 8 8"><path d="M0 2h8L4 7z" /></svg>
		</div>
		<button class="w31" aria-label="wireframe color"><svg viewBox="0 0 28 22"><path d="M8 3h6v7H8zM12 6h6v7h-6z" fill="none" stroke="#333" /><path d="M1 15h26v6H1z" fill="#000080" /></svg></button>
		<button class="w31" aria-label="solid color"><svg viewBox="0 0 28 22"><path d="M9 4l4-2 5 2v6l-5 3-4-3z" fill="#666" /><path d="M13 6l5-2v6l-5 3z" fill="#333" /><path d="M1 15h26v6H1z" fill="#808080" /></svg></button>
		<button class="w31" aria-label="surface color"><svg viewBox="0 0 28 22"><path d="M9 4l8-2v9l-8 2zM13 3v9M9 8l8-2" fill="#ddd" stroke="#555" /><path d="M1 15h26v6H1z" fill="#f07840" /></svg></button>
		<div class="field w129">
			<label class="pink" for="level">层别</label>
			<select id="level"><option>2</option></select>
			<svg viewBox="0 0 8 8"><path d="M0 2h8L4 7z" /></svg>
		</div>
		<button class="w32 soft">属性</button>
		<button class="w42" aria-label="point style"><svg viewBox="0 0 38 22"><path d="M4 11h10M9 6v10M6 14l6-6" stroke="#222" /><path d="M28 10h6l-3 4z" fill="#888" /></svg></button>
		<button class="w61" aria-label="line width"><svg viewBox="0 0 57 22"><path d="M1 11h38" stroke="#000" stroke-width="3" /><path d="M46 10h6l-3 4z" fill="#888" /></svg></button>
		<button class="w66" aria-label="line style"><svg viewBox="0 0 62 22"><path d="M1 11h43" stroke="#000" /><path d="M51 10h6l-3 4z" fill="#888" /></svg></button>
		<button class="w39">群组</button>
		<button class="w19">?</button>
	</footer>

	<div class="taskbar">
		<button class="start" aria-label="start">
			<svg viewBox="0 0 38 38">
				<defs><radialGradient id="orb" cx=".5" cy="1" r="1"><stop offset="0" stop-color="#28d8f4" /><stop offset=".45" stop-color="#1a6ca0" /><stop offset="1" stop-color="#8aa0b4" /></radialGradient></defs>
				<circle cx="19" cy="19" r="18" fill="url(#orb)" stroke="#24384c" />
				<path d="M10 12c3-2 5-2 8 0l-2 7c-3-2-5-1-8 0z" fill="#e8602c" />
				<path d="M20 13c3 2 5 1 8 0l-2 7c-3 1-5 2-8 0z" fill="#8cc83c" />
				<path d="M8 21c3-2 5-2 8 0l-2 7c-3-2-5-1-8 0z" fill="#3c9ce8" />
				<path d="M18 22c3 2 5 1 8 0l-2 7c-3 1-5 2-8 0z" fill="#fccc34" />
				<path d="M5 13C10 2 28 2 33 13 26 9 12 9 5 13z" fill="#fff" opacity=".35" />
			</svg>
		</button>
		<button class="app-btn" aria-label="browser">
			<svg viewBox="0 0 32 32">
				<path d="M7 18C7 6 27 5 27 18v1H12" fill="none" stroke="#4cc8f4" stroke-width="5" /><path d="M26 23c-4 9-19 7-19-5" fill="none" stroke="#4cc8f4" stroke-width="5" />
				<path d="M6 30C-3 28 8 6 24 2c6-1 7 3 4 8" fill="none" stroke="#f4c820" stroke-width="2.500" />
			</svg>
		</button>
		<button class="app-btn" aria-label="player">
			<svg viewBox="0 0 32 32"><path d="M8 5h20v23H8z" fill="#6cb0d8" /><path d="M4 4h20v25H4z" fill="#a4c4dc" stroke="#5c88a8" /><circle cx="14" cy="17" r="8.500" fill="#f07c20" stroke="#fcd8b0" /><path d="M11 11l9 6-9 6z" fill="#fff" /></svg>
		</button>
		<button class="app-btn" aria-label="explorer">
			<svg viewBox="0 0 32 32"><path d="M1 5h9l2 3h18v22H1z" fill="#e8c85c" /><path d="M3 3h8v5H3z" fill="#4c9c3c" /><path d="M12 5h7v4h-7z" fill="#d84c34" /><path d="M20 7h8v3h-8z" fill="#fff" /><path d="M1 10h30v20H1z" fill="#f8e898" /><path d="M6 30V20h20v10h-5v-5H11v5z" fill="#8cd0f0" stroke="#4ca0cc" /></svg>
		</button>
		<button class="app-btn" aria-label="calculator">
			<svg viewBox="0 0 32 32"><rect x="4" y="1" width="22" height="30" rx="1" fill="#a8d0ec" stroke="#5c90b8" /><path d="M7 4h16v9H7z" fill="#e8e4c8" stroke="#78a" /><path d="M19 6h2v5h-2z" fill="none" stroke="#446" /><path d="M7 17h17M7 21h17M7 25h17M7 28.500h17" stroke="#fff" stroke-width="2.500" stroke-dasharray="2.500 1.200" /><path d="M21 24h3v5h-3z" fill="#e0b040" /></svg>
		</button>
		<button class="app-btn app-btn--active" aria-label="Mastercam">
			<svg viewBox="0 0 32 32"><path d="M3 6h7l5 7 5-7h4l-7 11 6 13h-6l-4-8-7 9H2l9-13z" fill="#2c2c2c" stroke="#b8b8b0" /><circle cx="27" cy="5" r="3" fill="none" stroke="#d02044" stroke-width="2.400" /><path d="M30 5c0 5-1 7-5 7" fill="none" stroke="#d02044" stroke-width="2.400" /></svg>
		</button>
		<div class="tray">
			<span class="ime">CH</span>
			<svg viewBox="0 0 16 16"><path d="M1 7h14v8H1z" fill="#ddd" /><path d="M2 9h12M2 11h12M3 13h10" stroke="#555" stroke-dasharray="2 1" /><path d="M5 6c0-4 4 0 8-5" stroke="#ddd" fill="none" /></svg>
			<svg viewBox="0 0 16 16"><circle cx="8" cy="8" r="7" fill="#1c2cb0" stroke="#ccd4f4" /><path d="M6 6.500C6 4 10 4 10 6.500 10 8 8 8 8 9.500M8 11v1.500" stroke="#fff" fill="none" stroke-width="1.600" /></svg>
			<svg class="thin" viewBox="0 0 8 24"><path d="M2 4V1h5v4H5M1 4h4v4H1z" fill="none" stroke="#fff" /><path d="M1 16h6l-3 4z" fill="#fff" /></svg>
			<svg class="thin" viewBox="0 0 8 24"><path d="M0 15h8l-4-5z" fill="#ddd" /></svg>
			<svg viewBox="0 0 16 16"><path d="M1 4h9v8H1z" fill="#bbb" stroke="#fff" /><path d="M3 6h5v4H3z" fill="#222" /><path d="M11 6l3-2v8l-3-2M15 5v6" stroke="#fff" fill="none" /></svg>
			<svg viewBox="0 0 16 16"><path d="M1 3l6-1v6H1zM8 2l7-1v7H8zM1 9h6v6l-6-1zM8 9h7v7l-7-1z" fill="#fff" /></svg>
			<svg viewBox="0 0 16 16"><ellipse cx="8" cy="10" rx="5" ry="5" fill="#f4f4f4" /><circle cx="8" cy="4" r="3" fill="#e8a040" /><path d="M3 8h10v3H3z" fill="#d82020" /><path d="M3 14h4v2H3zM9 14h4v2H9zM6 5h4v2H6z" fill="#f0a020" /></svg>
			<svg viewBox="0 0 16 16"><path d="M3 1v15" stroke="#fff" stroke-width="1.500" /><path d="M4 2h5l1 2h5l-1 5H9L8 8H4z" fill="#fff" /></svg>
			<svg viewBox="0 0 16 16"><path d="M2 15v-2M5 15v-4M8 15V9M11 15V6M14 15V3" stroke="#fff" stroke-width="2" /></svg>
			<svg viewBox="0 0 16 16"><path d="M1 6h3l4-4v12l-4-4H1z" fill="#fff" /><path d="M10 5c1 2 1 4 0 6M12 3c2 3 2 7 0 10" stroke="#fff" fill="none" /></svg>
			<svg viewBox="0 0 16 16"><path d="M7 3h7v5l-3 3v4H9M9 1v3M13 0v3" stroke="#fff" fill="#777" stroke-width="1.500" /><path d="M1 8l7 7M8 8l-7 7" stroke="#e01818" stroke-width="2.500" /></svg>
		</div>
		<div class="clock"><span>23:04</span><span>2015/9/14</span></div>
		<button class="desk" aria-label="show desktop"></button>
	</div>
</div>

<style>
	:global(body) {
		margin: 0;
		background: #eeeeee;
	}

	.app {
		position: relative;
		display: flex;
		flex-direction: column;
		height: 100vh;
		overflow: hidden;
		background: #eeeeee;
		color: #222;
		font: 12px/16px 'Open Sans', 'Noto Sans CJK SC', sans-serif;
	}

	button {
		padding: 0;
		border: 0;
		background: none;
		color: inherit;
		font: inherit;
	}

	svg {
		display: block;
		flex: none;
	}

	.titlebar {
		display: flex;
		align-items: center;
		height: 20px;
		padding-left: 3px;
		color: #444;
		font-family: 'Noto Sans CJK SC', sans-serif;
	}

	.appicon {
		width: 14px;
		height: 16px;
		margin-right: 8px;
	}

	.path {
		margin-left: 12px;
	}

	.winbtns {
		display: flex;
		gap: 7px;
		margin-left: auto;
		padding-right: 4px;
	}

	.winbtns button {
		width: 20px;
	}

	.winbtns svg,
	.panel__head svg {
		width: 10px;
		height: 10px;
		margin: auto;
		fill: none;
		stroke: #555;
		stroke-width: 1.3;
	}

	.menu {
		display: flex;
		gap: 13px;
		height: 26px;
		padding-left: 16px;
	}

	.bar {
		display: flex;
		align-items: center;
		height: 27px;
	}

	.bar--file,
	.bar--draw {
		height: 26px;
	}

	.bar--coords {
		height: 30px;
	}

	.grip {
		flex: none;
		width: 12px;
		height: 20px;
		background: radial-gradient(circle at 6px 2px, #bbb 1px, transparent 2px) 0 0 / 12px 4px;
	}

	.bar--file .grip:first-child {
		width: 9px;
	}

	.sep {
		flex: none;
		width: 8px;
		height: 22px;
		background: linear-gradient(#c4c4c4, #c4c4c4) center / 1px 100% no-repeat;
	}

	.tool {
		flex: none;
		display: grid;
		place-items: center;
		width: 22px;
		height: 22px;
	}

	.tool svg {
		width: 17px;
		height: 17px;
	}

	.more {
		flex: none;
		width: 13px;
		height: 20px;
	}

	.more svg {
		width: 6px;
		height: 6px;
		margin: auto;
		fill: #777;
	}

	.axis {
		width: 22px;
		color: #777;
		font-size: 17px;
		font-weight: 600;
		text-align: center;
	}

	.grip + .axis {
		margin-right: 2px;
	}

	.combo {
		display: flex;
		align-items: center;
		box-sizing: border-box;
		width: 146px;
		height: 24px;
		padding-right: 4px;
		border: 1px solid #a8a8a8;
	}

	.combo + .axis {
		width: 26px;
	}

	.combo + .tool {
		margin-left: 4px;
	}

	.combo input {
		flex: 1;
		min-width: 0;
		padding: 0 3px;
		border: 0;
		background: none;
		color: #777;
		font: 13px/20px 'Noto Sans CJK SC', sans-serif;
	}

	.combo svg {
		width: 6px;
		height: 6px;
		fill: #bbb;
	}

	.brand {
		position: absolute;
		top: 21px;
		right: 33px;
		width: 112px;
		height: 47px;
		border: 1px solid #fff;
		border-top: 3px solid #0f7f9c;
		border-radius: 8px 8px 0 0;
		background: linear-gradient(#9fd6ea, #12a4cc 45%, #b8e2f2 65%, #f2fafd);
		color: #1c4c9c;
		font: 11px/13px 'Liberation Sans', sans-serif;
		text-align: center;
		text-decoration: none;
	}

	.brand strong {
		display: block;
		color: #fff;
		font: 700 27px/31px 'Noto Sans CJK TC', sans-serif;
		text-shadow: 1px 2px 2px #14506c;
	}

	.brand span {
		display: block;
	}

	.body {
		display: flex;
		flex: 1;
		min-height: 0;
	}

	.side {
		display: flex;
		flex-direction: column;
		align-items: center;
		flex: none;
	}

	.side .grip {
		width: 20px;
		height: 12px;
		background: radial-gradient(circle at 2px 6px, #bbb 1px, transparent 2px) 0 0 / 4px 12px;
	}

	.side .sep {
		width: 22px;
		height: 8px;
		background: linear-gradient(#c4c4c4, #c4c4c4) center / 100% 1px no-repeat;
	}

	.side .more {
		width: 22px;
		height: 13px;
	}

	.side--left {
		width: 26px;
		padding: 1px 2px 0 0;
	}

	.side--right {
		width: 30px;
		padding-top: 30px;
	}

	.side .grip--gap {
		margin-top: 13px;
	}

	main {
		display: flex;
		flex: 1;
		flex-direction: column;
		min-width: 0;
	}

	.prompt {
		height: 36px;
		padding-left: 187px;
		border-bottom: 5px solid #e2e3e0;
		color: #000;
		line-height: 42px;
	}

	.work {
		display: flex;
		flex: 1;
		min-height: 0;
	}

	.panel {
		display: flex;
		flex-direction: column;
		flex: none;
		width: 352px;
		margin-right: 4px;
	}

	.panel__head {
		display: flex;
		align-items: center;
		height: 35px;
		padding-right: 2px;
	}

	.panel__head h2 {
		flex: 1;
		margin: 0 0 0 2px;
		font: 400 19px/24px 'Noto Sans CJK SC', sans-serif;
		color: #333;
	}

	.panel__head button {
		width: 17px;
		height: 16px;
	}

	.bar--panel {
		height: 24px;
	}

	.bar--panel .tool {
		opacity: 0.5;
	}

	.g1 {
		font-size: 13px;
	}

	.treebox {
		display: flex;
		flex: 1;
		flex-direction: column;
		box-sizing: border-box;
		width: 350px;
		margin-top: 6px;
		border: 1px solid #b4b4b4;
		background: #fdfefd;
	}

	.tree {
		flex: 1;
		margin: 0;
		padding: 1px 1px 0 3px;
		list-style: none;
		overflow: hidden;
		color: #111;
	}

	.tree li {
		display: flex;
		height: 16px;
		overflow: hidden;
		font: 12px/16px 'Noto Sans CJK SC', sans-serif;
		white-space: nowrap;
	}

	.tree span {
		padding: 0 2px;
	}

	.tree .selected {
		flex: 1;
		background: #e0e0e0;
	}

	.guide {
		width: 19px;
		height: 16px;
		stroke: #444;
		stroke-dasharray: 1 1;
		fill: #fff;
	}

	.guide rect {
		stroke: #888;
		stroke-dasharray: none;
	}

	.guide .sign {
		stroke: #224;
		stroke-dasharray: none;
	}

	.node {
		width: 16px;
		height: 16px;
		margin: 0 3px 0 1px;
	}

	.scroll {
		display: flex;
		align-items: center;
		gap: 8px;
		height: 16px;
		padding: 0 5px;
		background: #ededed;
	}

	.scroll svg {
		width: 6px;
		height: 6px;
		fill: #333;
	}

	.thumb {
		display: flex;
		align-items: center;
		justify-content: center;
		gap: 2px;
		flex: 1;
		height: 13px;
		margin-right: 4px;
		border: 1px solid #8c8c8c;
		border-radius: 2px;
		background: linear-gradient(#eceeee, #dfe1e1 45%, #c4c8c8 50%, #d4d7d7);
	}

	.thumb i {
		width: 1px;
		height: 7px;
		background: #555;
	}

	.tabs {
		display: flex;
		height: 23px;
		margin-top: 22px;
		border-top: 1px solid #dcdcdc;
		box-shadow: 0 -22px #f8f8f8;
	}

	.tabs button {
		box-sizing: border-box;
		width: 32px;
		height: 21px;
	}

	.tabs .active {
		border: 1px solid #ccc;
		border-width: 0 1px 1px 0;
		background: #fff;
	}

	.tabs button + button {
		margin-left: 2px;
	}

	.view {
		display: flex;
		flex: 1;
		flex-direction: column;
		min-width: 0;
	}

	.canvas {
		flex: 1;
		width: 100%;
		min-height: 0;
	}

	.passes path {
		fill: none;
		stroke: #2b83cf;
		stroke-width: 1.3;
	}

	.passes-dim {
		fill: #65321b;
		opacity: 0.25;
	}

	.triad text {
		font: 700 15px 'Liberation Sans', sans-serif;
	}

	.scalebar path {
		fill: none;
		stroke: #000;
	}

	.scalebar text {
		font: 700 13px 'Noto Sans', 'Noto Sans CJK SC', sans-serif;
		text-anchor: middle;
	}

	.viewtabs {
		display: flex;
		height: 26px;
		border-top: 2px solid #fff;
		background: #fff;
		box-shadow: inset 0 1px #c4c4c4;
	}

	.viewtabs button {
		width: 64px;
		margin-top: 4px;
	}

	.viewtabs div {
		flex: 1;
		margin-top: 4px;
		border: 1px solid #b8bcbc;
		border-width: 1px 0 0 1px;
		background: #eeeeee;
	}

	.status {
		display: flex;
		gap: 2px;
		height: 22px;
		padding: 2px 0;
		background: #5d5d5d;
		color: #111;
		font: 12px/22px 'Noto Sans CJK SC', sans-serif;
	}

	.status p {
		flex: 1;
		margin: 0 0 0 4px;
		color: #f0f0f0;
	}

	.status button,
	.field {
		flex: none;
		background: #fdfdfd;
		text-align: center;
		white-space: nowrap;
	}

	.status button svg {
		height: 22px;
		margin: auto;
	}

	.status .soft {
		background: #ececec;
	}

	.field {
		position: relative;
		display: flex;
	}

	.field label {
		width: 13px;
		background: #e8e8e8;
	}

	.field .pink {
		width: 29px;
		background: #e8707c;
	}

	.field input,
	.field select {
		flex: 1;
		min-width: 0;
		margin: 2px 20px 2px 3px;
		padding: 0 1px;
		border: 0;
		background: #fff;
		font: inherit;
		line-height: 18px;
		appearance: none;
	}

	.field select {
		margin-right: 0;
	}

	.field .yellow {
		background: #f8ff80;
	}

	.field svg {
		position: absolute;
		top: 8px;
		right: 5px;
		width: 8px;
		height: 8px;
		pointer-events: none;
	}

	.w19 { width: 19px; }
	.w24 { width: 24px; }
	.w26 { width: 26px; }
	.w31 { width: 31px; }
	.w32 { width: 32px; }
	.w39 { width: 39px; }
	.w42 { width: 42px; }
	.w44 { width: 44px; }
	.w60 { width: 60px; }
	.w61 { width: 61px; }
	.w66 { width: 66px; }
	.w97 { width: 97px; }
	.w129 { width: 129px; }

	.taskbar {
		display: flex;
		align-items: center;
		box-sizing: border-box;
		height: 39px;
		border-top: 1px solid #8c8c90;
		background:
			linear-gradient(#6c6284, #6c6284 50%, #b82c68 75%) 67% 0 / 5px 100% no-repeat,
			radial-gradient(circle at 1190px 30px, transparent 22px, #6c204866 26px, transparent 32px),
			radial-gradient(circle at 1370px 40px, transparent 50px, #6c204866 54px, transparent 60px),
			linear-gradient(90deg, #20232f, #272a3a 5%, #262a3a 32%, #2e3343 35%, #3c3450 42%, #37274f 48%, #483860 51%, #3a2752 54%, #38244c 62%, #40304e 66%, #33283f 70%, #28253a 76%, #1c1d2b 82%, #22263a);
		color: #fff;
	}

	.start {
		width: 54px;
	}

	.start svg {
		width: 38px;
		height: 38px;
		margin: auto;
	}

	.app-btn {
		width: 58px;
		height: 38px;
		margin-right: 4px;
	}

	.app-btn svg {
		width: 32px;
		height: 32px;
		margin: auto;
	}

	.start + .app-btn {
		margin-left: 6px;
	}

	.app-btn--active {
		box-sizing: border-box;
		border: 1px solid #e8e8e8;
		border-radius: 2px;
		background: linear-gradient(120deg, #cacaca, #8c8c8e 50%, #b0b0b2);
	}

	.tray {
		display: flex;
		align-items: center;
		gap: 8px;
		margin: 0 9px 0 auto;
	}

	.tray svg {
		width: 16px;
		height: 16px;
	}

	.tray .thin {
		width: 9px;
		height: 24px;
	}

	.ime {
		font-size: 11px;
	}

	.clock {
		display: flex;
		flex-direction: column;
		width: 79px;
		font-size: 13px;
		line-height: 18px;
		text-align: center;
	}

	.desk {
		box-sizing: border-box;
		width: 14px;
		height: 38px;
		border: 1px solid #60647a;
		background: linear-gradient(135deg, #4a4e60, #242838);
	}
</style>
